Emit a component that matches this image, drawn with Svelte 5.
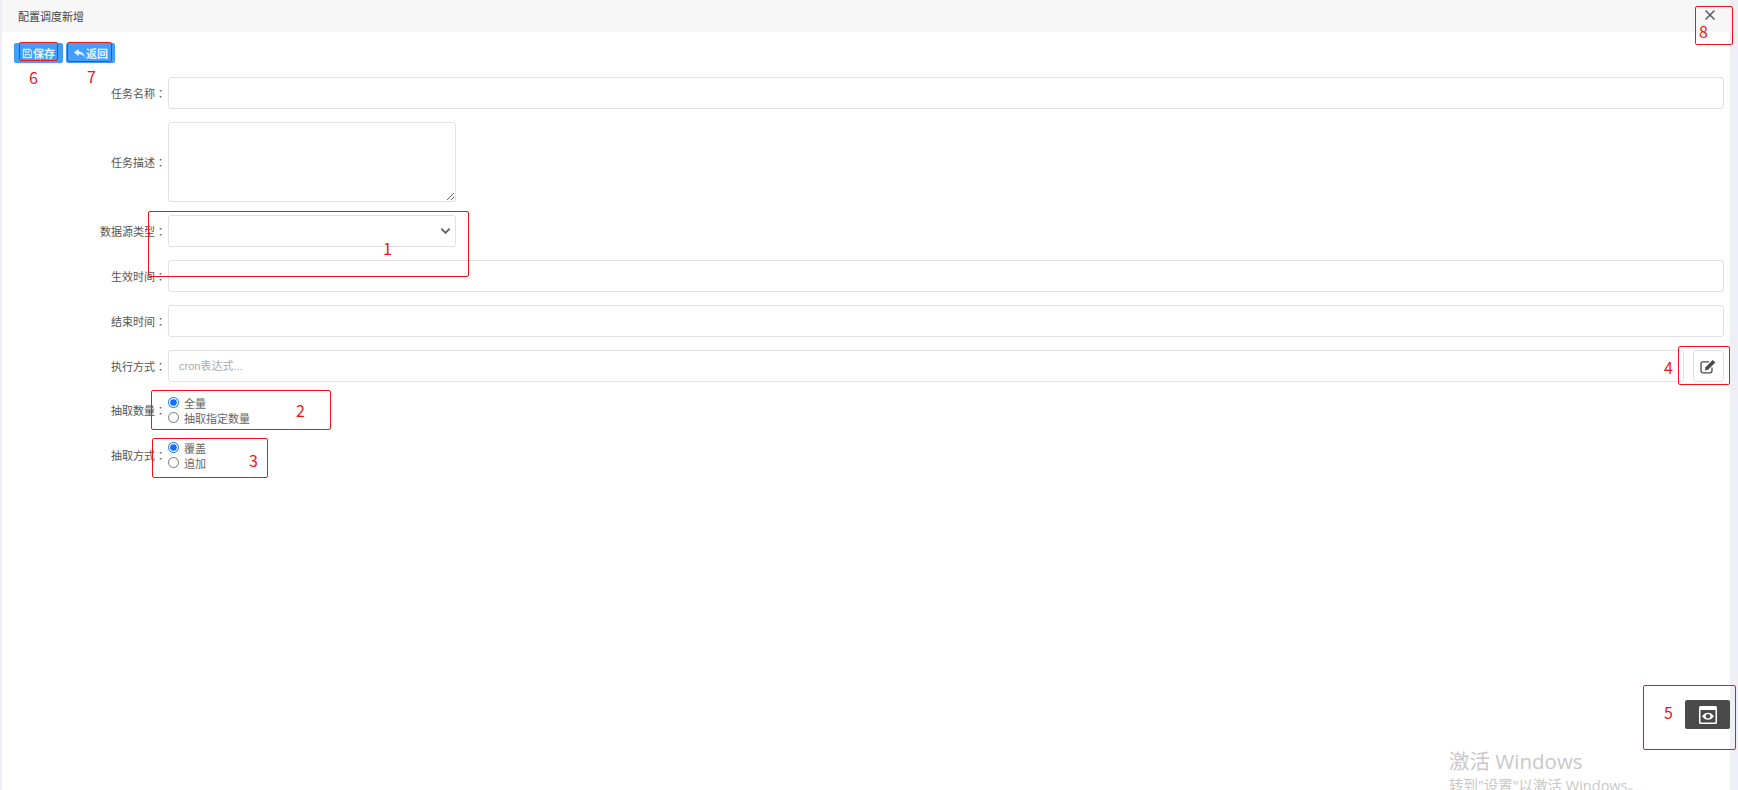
<script>
    const notes = [
        { n: 1, box: [148, 211, 321, 66], at: [383, 236] },
        { n: 2, box: [151, 390, 180, 40], at: [296, 398] },
        { n: 3, box: [152, 438, 116, 40], at: [249, 448] },
        { n: 4, box: [1678, 346, 52, 39], at: [1664, 355] },
        { n: 5, box: [1643, 685, 93, 65], at: [1664, 700] },
        { n: 6, box: [19, 42, 39, 19], at: [29, 65] },
        { n: 7, box: [67, 42, 45, 20], at: [87, 64] },
        { n: 8, box: [1695, 6, 38, 39], at: [1699, 19] }
    ];
</script>

<div class="page">
    <main class="panel">
        <header class="title">
            <span>配置调度新增</span>
            <svg class="close" viewBox="0 0 10 10" width="10" height="10">
                <path d="M.5.5l9 9M9.500.5l-9 9" stroke="#555a66" stroke-width="1.500" fill="none" />
            </svg>
        </header>

        <div class="toolbar">
            <button class="btn">
                <svg viewBox="0 0 12 12" width="11" height="11">
                    <path d="M1.500 1.500h7l2 2v7h-9z M3.500 1.500v3h4v-3 M3.500 10.500V7h5v3.500" fill="none" stroke="#dcecff" stroke-width="1.100" />
                </svg>保存
            </button>
            <button class="btn">
                <svg viewBox="0 0 14 12" width="13" height="11">
                    <path d="M6 1L1 5l5 4V6.600c3 0 5 .8 7 3.900C12.400 6.500 10 4 6 3.600z" fill="#e8f3ff" />
                </svg>返回
            </button>
        </div>

        <form class="form">
            <div class="row">
                <span class="label">任务名称<i>：</i></span>
                <input class="field" type="text" />
            </div>
            <div class="row">
                <span class="label">任务描述<i>：</i></span>
                <textarea class="field short area"></textarea>
            </div>
            <div class="row">
                <span class="label">数据源类型<i>：</i></span>
                <div class="field short select">
                    <svg viewBox="0 0 12 8" width="11" height="8">
                        <path d="M1.500 1.500L6 6l4.500-4.500" stroke="#5f6168" stroke-width="2" fill="none" />
                    </svg>
                </div>
            </div>
            <div class="row">
                <span class="label">生效时间<i>：</i></span>
                <input class="field" type="text" />
            </div>
            <div class="row">
                <span class="label">结束时间<i>：</i></span>
                <input class="field" type="text" />
            </div>
            <div class="row">
                <span class="label">执行方式<i>：</i></span>
                <input class="field" type="text" placeholder="cron表达式..." />
                <button type="button" class="edit" aria-label="编辑">
                    <svg viewBox="0 0 17 15" width="17" height="15">
                        <path d="M12 8.500v3.300a2 2 0 0 1-2 2H3a2 2 0 0 1-2-2V4.800a2 2 0 0 1 2-2h6" stroke="#4a4a4a" stroke-width="1.300" fill="none" />
                        <path d="M5.500 8.200L12.700 1l2.600 2.600-7.200 7.200-3.200.6z" fill="#4a4a4a" />
                    </svg>
                </button>
            </div>
            <div class="row radios-row">
                <span class="label">抽取数量<i>：</i></span>
                <div class="radios">
                    <label><input type="radio" name="count" checked />全量</label>
                    <label><input type="radio" name="count" />抽取指定数量</label>
                </div>
            </div>
            <div class="row radios-row">
                <span class="label">抽取方式<i>：</i></span>
                <div class="radios">
                    <label><input type="radio" name="mode" checked />覆盖</label>
                    <label><input type="radio" name="mode" />追加</label>
                </div>
            </div>
        </form>
    </main>

    <button class="preview" aria-label="预览">
        <svg viewBox="0 0 18 18" width="18" height="18">
            <rect width="18" height="18" rx="1.500" fill="#fff" />
            <rect x="1.500" y="4" width="15" height="12.500" fill="#4a4a4a" />
            <path d="M3 10.200C4.800 7.700 6.800 6.700 9 6.700s4.200 1 6 3.500c-1.800 2.500-3.800 3.500-6 3.500s-4.200-1-6-3.500z" fill="#fff" />
            <circle cx="9" cy="10.200" r="2.300" fill="#4a4a4a" />
        </svg>
    </button>

    <div class="watermark">
        <div class="wm-big">激活 Windows</div>
        <div class="wm-small">转到"设置"以激活 Windows。</div>
    </div>

    {#each notes as note}
        <div
            class="note-box"
            style="left:{note.box[0]}px;top:{note.box[1]}px;width:{note.box[2]}px;height:{note.box[3]}px"
        ></div>
        <div class="note-num" style="left:{note.at[0]}px;top:{note.at[1]}px">{note.n}</div>
    {/each}
</div>

<style>
    :global(body) {
        margin: 0;
        background: #eeeff5;
    }
    .page {
        position: relative;
        width: 1738px;
        height: 790px;
        overflow: hidden;
        font-family: "Noto Sans CJK SC", "Liberation Sans", sans-serif;
        font-size: 12px;
        color: #555;
    }
    .panel {
        margin: 0 8px 0 2px;
        height: 790px;
        background: #fff;
    }
    .title {
        height: 32px;
        padding: 0 15px 0 16px;
        background: #f7f7f7;
        display: flex;
        align-items: center;
        justify-content: space-between;
        color: #444;
        font-size: 11px;
    }
    .close {
        transform: translateY(-1px);
    }
    .toolbar {
        display: flex;
        gap: 3px;
        padding: 11px 0 0 12px;
    }
    .btn {
        height: 20px;
        width: 49px;
        padding: 0;
        border: 0;
        border-radius: 2px;
        background: #409eff;
        color: #e8f3ff;
        font: inherit;
        font-size: 11px;
        font-weight: 700;
        display: flex;
        align-items: center;
        justify-content: center;
    }
    .form {
        display: flex;
        flex-direction: column;
        gap: 13px;
        padding: 14px 6px 0 0;
    }
    .row {
        display: flex;
        align-items: center;
    }
    .label {
        width: 164px;
        margin-right: 2px;
        flex: none;
        text-align: right;
        font-size: 11px;
        color: #555;
    }
    .label i {
        font-style: normal;
        font-family: "Noto Sans CJK TC", sans-serif;
    }
    .field {
        box-sizing: border-box;
        flex: 1;
        min-width: 0;
        height: 32px;
        margin: 0;
        padding: 0 10px;
        border: 1px solid #dfe0e8;
        border-radius: 3px;
        background: #fff;
        font-family: "Liberation Sans", "Noto Sans CJK SC", sans-serif;
        font-size: 11px;
        outline: none;
    }
    .field::placeholder {
        color: #aaa;
    }
    .short {
        flex: none;
        width: 288px;
    }
    .area {
        height: 80px;
    }
    .select {
        display: flex;
        align-items: center;
        justify-content: flex-end;
        padding-right: 4px;
    }
    .edit {
        box-sizing: border-box;
        flex: none;
        width: 31px;
        height: 32px;
        margin-left: 9px;
        padding: 0;
        border: 1px solid #dfe0e8;
        border-radius: 3px;
        background: #fff;
        display: flex;
        align-items: center;
        justify-content: center;
    }
    .radios-row {
        margin-bottom: 4px;
    }
    .radios-row + .radios-row {
        margin-top: -2px;
    }
    .radios {
        display: flex;
        flex-direction: column;
    }
    .radios label {
        height: 15px;
        display: flex;
        align-items: center;
        gap: 5px;
        font-size: 11px;
        color: #666;
    }
    .radios input {
        margin: 0;
        width: 11px;
        height: 11px;
        accent-color: #0d6efd;
    }
    .preview {
        position: absolute;
        left: 1685px;
        top: 700px;
        width: 45px;
        height: 29px;
        padding: 0;
        border: 0;
        border-radius: 2px;
        background: #4a4a4a;
        display: flex;
        align-items: center;
        justify-content: center;
    }
    .watermark {
        position: absolute;
        left: 1449px;
        top: 747px;
        white-space: nowrap;
        color: #c8c8c8;
        font-family: "Open Sans", "Noto Sans CJK SC", sans-serif;
    }
    .wm-big {
        font-size: 20.500px;
        line-height: 28px;
    }
    .wm-small {
        font-size: 14.500px;
        line-height: 22px;
    }
    .note-box {
        position: absolute;
        box-sizing: border-box;
        border: 1px solid #f01414;
        border-radius: 2px;
    }
    .note-num {
        position: absolute;
        color: #f01414;
        font-size: 16px;
        line-height: 24px;
    }
</style>
